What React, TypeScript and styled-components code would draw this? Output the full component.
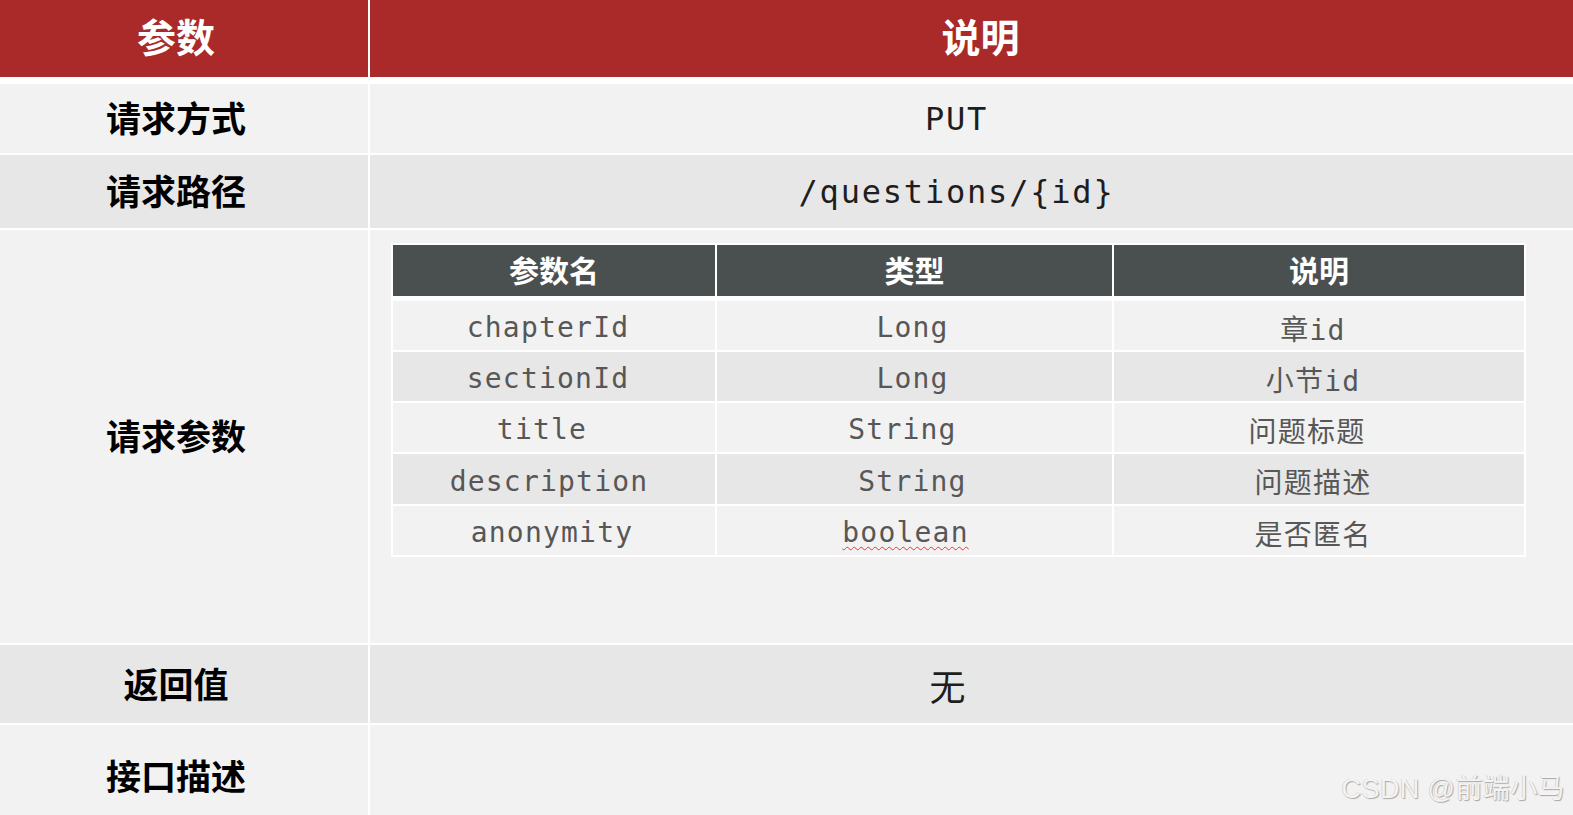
import React from 'react';
import styled, { createGlobalStyle } from 'styled-components';

const GlobalStyle = createGlobalStyle`
  html, body {
    margin: 0;
    padding: 0;
    background: #ffffff;
  }
  body {
    font-family: 'Noto Sans CJK SC', 'Noto Sans', sans-serif;
  }
`;

type Tone = 'light' | 'dark';

const toneColor = (tone: Tone) => (tone === 'dark' ? '#e7e7e7' : '#f2f2f2');

const Page = styled.div`
  position: relative;
  width: 1573px;
  height: 815px;
  overflow: hidden;
  background: #ffffff;
  display: flex;
  flex-direction: column;
  gap: 2px;
`;

const Row = styled.div<{ $height?: number; $gapAfter?: number }>`
  display: grid;
  grid-template-columns: 368px 1fr;
  column-gap: 2px;
  height: ${({ $height }) => ($height ? `${$height}px` : 'auto')};
  flex: ${({ $height }) => ($height ? '0 0 auto' : '1 1 auto')};
  margin-bottom: ${({ $gapAfter }) => $gapAfter ?? 0}px;
`;

const HeadCell = styled.div<{ $shift?: number }>`
  background: #a92a28;
  color: #ffffff;
  font-family: 'Noto Sans CJK SC', sans-serif;
  font-weight: 700;
  font-size: 39px;
  display: flex;
  align-items: center;
  justify-content: center;
  padding-left: ${({ $shift }) => ($shift && $shift > 0 ? $shift : 0)}px;
  padding-right: ${({ $shift }) => ($shift && $shift < 0 ? -$shift : 0)}px;
  padding-bottom: 7px;
`;

const LabelCell = styled.div<{ $tone: Tone; $drop?: number }>`
  background: ${({ $tone }) => toneColor($tone)};
  color: #000000;
  font-family: 'Noto Sans CJK SC', sans-serif;
  font-weight: 700;
  font-size: 35px;
  display: flex;
  align-items: center;
  justify-content: center;
  padding-right: 16px;
  padding-top: ${({ $drop }) => ($drop ? $drop : 0)}px;
  padding-bottom: 4px;
`;

const ValueCell = styled.div<{ $tone: Tone; $top?: boolean }>`
  background: ${({ $tone }) => toneColor($tone)};
  color: #1e1e1e;
  display: flex;
  align-items: ${({ $top }) => ($top ? 'flex-start' : 'center')};
  justify-content: ${({ $top }) => ($top ? 'flex-start' : 'center')};
  padding: ${({ $top }) => ($top ? '13px 47px 0 21px' : '0 30px 0 0')};
`;

const MonoValue = styled.span`
  font-family: 'DejaVu Sans Mono', monospace;
  font-size: 32px;
  letter-spacing: 1.8px;
`;

const CjkValue = styled.span`
  font-family: 'Noto Sans CJK SC', sans-serif;
  font-size: 36px;
  padding-right: 18px;
  padding-top: 2px;
`;

const ParamTable = styled.div`
  width: 100%;
  background: #ffffff;
  padding: 2px;
  display: flex;
  flex-direction: column;
  gap: 2px;
`;

const ParamRow = styled.div<{ $height: number; $gapAfter?: number }>`
  display: grid;
  grid-template-columns: 322px 395px 1fr;
  column-gap: 2px;
  height: ${({ $height }) => $height}px;
  margin-bottom: ${({ $gapAfter }) => $gapAfter ?? 0}px;
`;

const ParamHead = styled.div`
  background: #4a5050;
  color: #ffffff;
  font-family: 'Noto Sans CJK SC', sans-serif;
  font-weight: 700;
  font-size: 30px;
  display: flex;
  align-items: center;
  justify-content: center;
  padding-bottom: 3px;
`;

const ParamCell = styled.div<{ $tone: Tone; $shift?: number }>`
  background: ${({ $tone }) => toneColor($tone)};
  color: #575757;
  font-family: 'DejaVu Sans Mono', 'Noto Sans CJK SC', monospace;
  font-size: 28px;
  letter-spacing: 1.2px;
  display: flex;
  align-items: center;
  justify-content: center;
  padding-top: 4px;
  padding-left: ${({ $shift }) => ($shift && $shift > 0 ? $shift : 0)}px;
  padding-right: ${({ $shift }) => ($shift && $shift < 0 ? -$shift : 0)}px;
`;

const Misspelled = styled.span`
  text-decoration: underline wavy #e53935;
  text-decoration-thickness: 1px;
  text-underline-offset: 4px;
`;

const Watermark = styled.div`
  position: absolute;
  right: 8px;
  bottom: 9px;
  font-family: 'Liberation Sans', 'Noto Sans CJK SC', sans-serif;
  font-size: 27px;
  color: #f4f4f4;
  text-shadow: 1px 1px 1px #a8a8a8, -0.5px -0.5px 0 #c8c8c8;
  letter-spacing: 0.4px;
`;

const params = [
  { name: 'chapterId', type: 'Long', desc: '章id', shift: [-12, -4, -12] },
  { name: 'sectionId', type: 'Long', desc: '小节id', shift: [-12, -4, -12] },
  { name: 'title', type: 'String', desc: '问题标题', shift: [-24, -24, -24] },
  { name: 'description', type: 'String', desc: '问题描述', shift: [-10, -4, -12] },
  { name: 'anonymity', type: 'boolean', desc: '是否匿名', shift: [-4, -18, -12] }
];

export default function App() {
  return (
    <>
      <GlobalStyle />
      <Page>
        <Row $height={77} $gapAfter={5}>
          <HeadCell $shift={-16}>参数</HeadCell>
          <HeadCell $shift={18}>说明</HeadCell>
        </Row>

        <Row $height={69}>
          <LabelCell $tone='light'>请求方式</LabelCell>
          <ValueCell $tone='light'>
            <MonoValue>PUT</MonoValue>
          </ValueCell>
        </Row>

        <Row $height={73}>
          <LabelCell $tone='dark'>请求路径</LabelCell>
          <ValueCell $tone='dark'>
            <MonoValue>/questions/&#123;id&#125;</MonoValue>
          </ValueCell>
        </Row>

        <Row $height={413}>
          <LabelCell $tone='light'>请求参数</LabelCell>
          <ValueCell $tone='light' $top>
            <ParamTable>
              <ParamRow $height={51} $gapAfter={3}>
                <ParamHead>参数名</ParamHead>
                <ParamHead>类型</ParamHead>
                <ParamHead>说明</ParamHead>
              </ParamRow>
              {params.map((p, i) => {
                const tone: Tone = i % 2 === 1 ? 'dark' : 'light';
                return (
                  <ParamRow key={p.name} $height={i === 3 ? 50 : 49}>
                    <ParamCell $tone={tone} $shift={p.shift[0]}>{p.name}</ParamCell>
                    <ParamCell $tone={tone} $shift={p.shift[1]}>
                      {p.type === 'boolean' ? <Misspelled>{p.type}</Misspelled> : p.type}
                    </ParamCell>
                    <ParamCell $tone={tone} $shift={p.shift[2]}>{p.desc}</ParamCell>
                  </ParamRow>
                );
              })}
            </ParamTable>
          </ValueCell>
        </Row>

        <Row $height={78}>
          <LabelCell $tone='dark'>返回值</LabelCell>
          <ValueCell $tone='dark'>
            <CjkValue>无</CjkValue>
          </ValueCell>
        </Row>

        <Row>
          <LabelCell $tone='light' $drop={12}>接口描述</LabelCell>
          <ValueCell $tone='light' />
        </Row>

        <Watermark>CSDN @前端小马</Watermark>
      </Page>
    </>
  );
}
